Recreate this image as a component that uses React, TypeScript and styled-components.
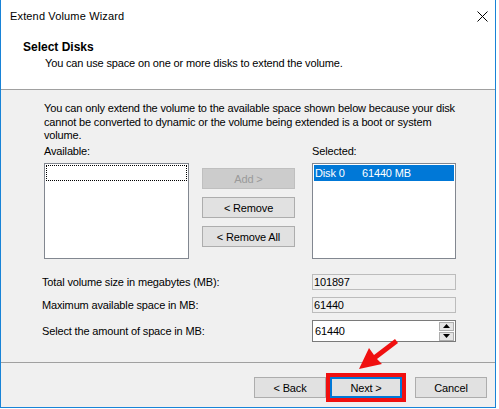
import styled, { createGlobalStyle, css } from "styled-components";

const GlobalStyle = createGlobalStyle`
  html, body {
    margin: 0;
    padding: 0;
    background: #fff;
  }
  body {
    font-family: "Liberation Sans", Arial, sans-serif;
    font-size: 11px;
    color: #000;
  }
`;

const Window = styled.div`
  position: relative;
  width: 496px;
  height: 408px;
  box-sizing: border-box;
  border: 1px solid #1883d7;
  border-top: none;
  display: flex;
  flex-direction: column;
  background: #f0f0f0;
  letter-spacing: -0.15px;
`;

const TitleBar = styled.div`
  height: 32px;
  flex: none;
  display: flex;
  align-items: center;
  justify-content: space-between;
  padding: 0 7px 0 9px;
  background: #fff;
  font-size: 11px;
  letter-spacing: 0.15px;

  svg {
    display: block;
  }
`;

const Header = styled.div`
  height: 58px;
  flex: none;
  box-sizing: border-box;
  padding: 8px 0 0 22px;
  background: #fff;
  border-bottom: 1px solid #a0a0a0;

  h3 {
    margin: 0;
    font-size: 12px;
    line-height: 15px;
    font-weight: bold;
    letter-spacing: 0;
  }
  p {
    margin: 0 0 0 22px;
    line-height: 16px;
  }
`;

const Body = styled.div`
  flex: 1;
  padding: 12px 0 0 43px;
`;

const Intro = styled.p`
  margin: 0 0 1px;
  line-height: 13.5px;
  white-space: nowrap;
`;

const Picker = styled.div`
  display: grid;
  grid-template-columns: 145px 123px 144px;
  grid-template-rows: 14px 96px;
  row-gap: 5.5px;
`;

const Label = styled.div<{ $col: number }>`
  grid-column: ${(p) => p.$col};
  line-height: 14px;
  white-space: nowrap;
`;

const ListBox = styled.div<{ $col: number }>`
  grid-column: ${(p) => p.$col};
  grid-row: 2;
  box-sizing: border-box;
  padding: 1px;
  background: #fff;
  border: 1px solid #828790;
`;

const FocusRow = styled.div`
  height: 16px;
  box-sizing: border-box;
  border: 1px dotted #000;
`;

const SelectedRow = styled.div`
  height: 16px;
  line-height: 16px;
  padding-left: 1px;
  background: #0078d7;
  color: #fff;

  span {
    display: inline-block;
    width: 47px;
  }
`;

const ButtonColumn = styled.div`
  grid-column: 2;
  grid-row: 2;
  display: flex;
  flex-direction: column;
  gap: 8px;
  padding: 5px 0 0 13px;
`;

const Button = styled.button<{ $width: number; $disabled?: boolean; $default?: boolean; $marked?: boolean }>`
  width: ${(p) => p.$width}px;
  height: 21px;
  padding: 0;
  box-sizing: border-box;
  font: inherit;
  letter-spacing: inherit;
  color: #000;
  background: #e1e1e1;
  border: 1px solid #adadad;

  ${(p) =>
    p.$disabled &&
    css`
      background: #cccccc;
      border-color: #bfbfbf;
      color: #9a9a9a;
    `}
  ${(p) =>
    p.$default &&
    css`
      border: 2px solid #0078d7;
    `}
  ${(p) =>
    p.$marked &&
    css`
      outline: 4px solid #f01010;
      outline-offset: 0;
    `}
`;

const Fields = styled.div`
  display: grid;
  grid-template-columns: 270px 144px;
  grid-template-rows: 16px 16px 22px;
  row-gap: 7px;
  align-items: center;
  margin: 15px 0 0 -2px;

  & > :nth-child(4) {
    margin-top: -1px;
  }
`;

const FieldLabel = styled.div`
  line-height: 14px;
  white-space: nowrap;
`;

const ReadOnly = styled.div`
  height: 16px;
  box-sizing: border-box;
  border: 1px solid #bcbcbc;
  background: #f0f0f0;
  line-height: 14px;
  padding-left: 1px;
`;

const Spin = styled.div`
  height: 22px;
  box-sizing: border-box;
  border: 1px solid #7a7a7a;
  background: #fff;
  display: flex;
  align-items: center;
  justify-content: space-between;
  padding: 0 1px 0 2px;
`;

const SpinButtons = styled.div`
  display: flex;
  flex-direction: column;
  gap: 1px;
`;

const SpinButton = styled.div`
  width: 15px;
  height: 9px;
  box-sizing: border-box;
  border: 1px solid #adadad;
  background: #e5e5e5;
  display: flex;
  align-items: center;
  justify-content: center;
`;

const Footer = styled.div`
  height: 45px;
  flex: none;
  box-sizing: border-box;
  border-top: 1px solid #a0a0a0;
  display: flex;
  justify-content: flex-end;
  align-items: flex-start;
  padding: 14px 8px 0 0;
  gap: 4px;

  & > :last-child {
    margin-left: 9px;
  }
`;

const Arrow = styled.svg`
  position: absolute;
  left: 0;
  top: 0;
  pointer-events: none;
`;

export default function App() {
  return (
    <>
      <GlobalStyle />
      <Window>
        <TitleBar>
          <span>Extend Volume Wizard</span>
          <svg width="11" height="11" viewBox="0 0 11 11">
            <path d="M0.5 0.5 L10.5 10.5 M10.5 0.5 L0.5 10.5" stroke="#000" strokeWidth="1" />
          </svg>
        </TitleBar>
        <Header>
          <h3>Select Disks</h3>
          <p>You can use space on one or more disks to extend the volume.</p>
        </Header>
        <Body>
          <Intro>
            You can only extend the volume to the available space shown below because your disk
            <br />
            cannot be converted to dynamic or the volume being extended is a boot or system
            <br />
            volume.
          </Intro>
          <Picker>
            <Label $col={1}>Available:</Label>
            <Label $col={3}>Selected:</Label>
            <ListBox $col={1}>
              <FocusRow />
            </ListBox>
            <ButtonColumn>
              <Button $width={93} $disabled>
                Add &gt;
              </Button>
              <Button $width={93}>&lt; Remove</Button>
              <Button $width={93}>&lt; Remove All</Button>
            </ButtonColumn>
            <ListBox $col={3}>
              <SelectedRow>
                <span>Disk 0</span>61440 MB
              </SelectedRow>
            </ListBox>
          </Picker>
          <Fields>
            <FieldLabel>Total volume size in megabytes (MB):</FieldLabel>
            <ReadOnly>101897</ReadOnly>
            <FieldLabel>Maximum available space in MB:</FieldLabel>
            <ReadOnly>61440</ReadOnly>
            <FieldLabel>Select the amount of space in MB:</FieldLabel>
            <Spin>
              <span>61440</span>
              <SpinButtons>
                <SpinButton>
                  <svg width="7" height="4" viewBox="0 0 7 4">
                    <path d="M3.5 0 L7 4 L0 4 Z" fill="#000" />
                  </svg>
                </SpinButton>
                <SpinButton>
                  <svg width="7" height="4" viewBox="0 0 7 4">
                    <path d="M0 0 L7 0 L3.5 4 Z" fill="#000" />
                  </svg>
                </SpinButton>
              </SpinButtons>
            </Spin>
          </Fields>
        </Body>
        <Footer>
          <Button $width={72}>&lt; Back</Button>
          <Button $width={72} $default $marked>
            Next &gt;
          </Button>
          <Button $width={72}>Cancel</Button>
        </Footer>
        <Arrow width="496" height="408" viewBox="0 0 496 408">
          <polygon
            points="397,343 394,339 373,355 368,348 358,369 381,364 376,359"
            fill="#f01010"
          />
        </Arrow>
      </Window>
    </>
  );
}
